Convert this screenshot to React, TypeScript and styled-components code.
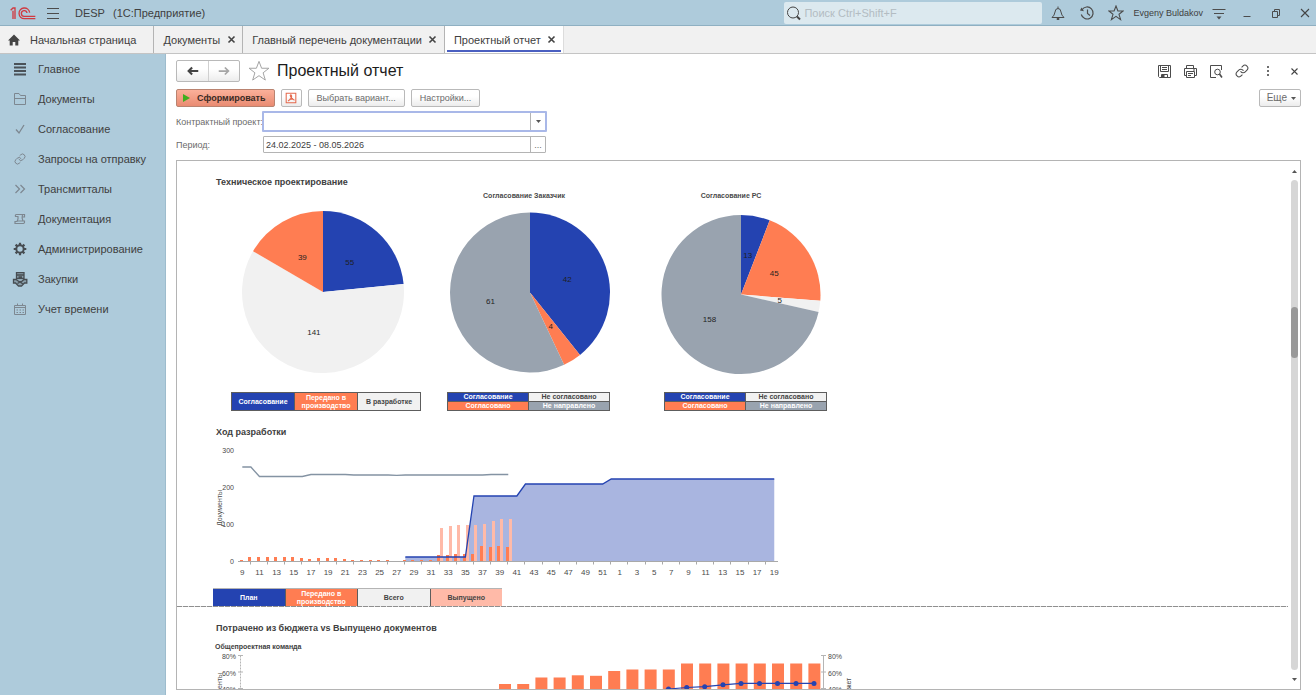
import React from "react";
import styled, { createGlobalStyle, css } from "styled-components";
import { Link as ChainLink } from "lucide-react";

const c = {
  sky: "#aecbdb",
  skyLine: "#8fb0c2",
  text: "#404040",
  muted: "#6b6b6b",
  line: "#b4b4b4",
  blue: "#2443b1",
  orange: "#ff7d52",
  pink: "#ffbaa8",
  light: "#f1f1f1",
  gray: "#99a3af",
  area: "#a9b5e0",
};

const GlobalStyle = createGlobalStyle`
  *, *::before, *::after { box-sizing: border-box; }
  body { margin: 0; background: #fff; color: ${c.text}; font-family: "Liberation Sans", Arial, sans-serif; font-size: 11px; }
  button, input, select { font: inherit; color: inherit; margin: 0; }
  ul, nav, h1, h2, h3, figure { margin: 0; padding: 0; }
  ul { list-style: none; }
`;

const Shell = styled.div`
  display: flex;
  flex-direction: column;
  height: 100vh;
  overflow: hidden;
`;

const TitleBar = styled.header`
  display: flex;
  align-items: center;
  flex: none;
  height: 26px;
  padding: 0 3px 0 10px;
  background: ${c.sky};
  border-bottom: 1px solid ${c.skyLine};
`;

const IconButton = styled.button<{ $w?: number }>`
  display: inline-flex;
  align-items: center;
  justify-content: center;
  flex: none;
  width: ${(p) => p.$w ?? 16}px;
  height: 22px;
  padding: 0;
  border: 0;
  background: none;
  color: #4c4c4c;
`;

const AppName = styled.div`
  display: flex;
  gap: 8px;
  margin-left: 5px;
  white-space: nowrap;
`;

const Search = styled.label`
  display: flex;
  align-items: center;
  gap: 2px;
  width: 258px;
  height: 22px;
  margin: 0 8px 0 auto;
  padding-left: 2px;
  background: #dce9ef;
  border-radius: 2px;
  input {
    flex: 1;
    min-width: 0;
    padding: 0;
    border: 0;
    background: none;
    outline: none;
  }
  input::placeholder { color: #b3bcc2; opacity: 1; }
`;

const WindowTools = styled.div`
  display: flex;
  align-items: center;
  gap: 13px;
`;

const WindowButtons = styled(WindowTools)`
  margin-left: 12px;
`;

const UserName = styled.span`
  margin: 0 -5px 0 -4px;
  font-size: 9px;
  white-space: nowrap;
`;

const Tabs = styled.nav`
  display: flex;
  flex: none;
  height: 28px;
  background: ${c.light};
  border-bottom: 1px solid #c4c4c4;
`;

const Tab = styled.div<{ $active?: boolean }>`
  display: flex;
  align-items: center;
  gap: 6px;
  padding: 0 6px 0 9px;
  border-right: 1px solid ${c.line};
  white-space: nowrap;
  a {
    display: flex;
    align-items: center;
    gap: 10px;
    color: inherit;
    text-decoration: none;
  }
  ${(p) =>
    p.$active &&
    css`
      background: linear-gradient(#4a5fc0, #4a5fc0) center 24px / calc(100% - 4px) 2px no-repeat #fff;
      border-right-color: #dcdcdc;
    `}
`;

const HomeTab = styled(Tab)`
  padding: 0 17px 0 8px;
`;

const Body = styled.div`
  display: flex;
  flex: 1;
  min-height: 0;
`;

const Sidebar = styled.nav`
  flex: none;
  width: 166px;
  background: ${c.sky};
  border-right: 1px solid #9dbccd;
`;

const SideLink = styled.a`
  display: grid;
  grid-template-columns: 16px 1fr;
  align-items: center;
  justify-items: start;
  gap: 10px;
  height: 30px;
  padding-left: 12px;
  color: ${c.text};
  text-decoration: none;
  white-space: nowrap;
`;

const Main = styled.main`
  display: flex;
  flex: 1;
  flex-direction: column;
  min-width: 0;
  padding: 6px 8px 5px 10px;
`;

const Row = styled.div`
  display: flex;
  align-items: center;
`;

const PageHead = styled(Row)`
  height: 22px;
  h1 {
    margin: 0 auto 0 7px;
    color: #1c1c1c;
    font-size: 16px;
    font-weight: 400;
    line-height: 22px;
    white-space: nowrap;
  }
`;

const HeadTools = styled(Row)`
  gap: 10px;
  padding-right: 6px;
`;

const raised = css`
  border: 1px solid #b9b9b9;
  border-radius: 2px;
  background: linear-gradient(#fff 40%, #ececec);
`;

const History = styled.div`
  display: flex;
  ${raised}
  margin-right: 8px;
  button {
    width: 31px;
    height: 20px;
  }
  button + button {
    border-left: 1px solid #d0d0d0;
  }
`;

const Toolbar = styled(Row)`
  gap: 6px;
  margin-top: 7px;
  padding-right: 7px;
`;

const Button = styled.button<{ $primary?: boolean; $push?: boolean }>`
  display: inline-flex;
  align-items: center;
  justify-content: center;
  gap: 6px;
  height: 18px;
  padding: 0 8px;
  ${raised}
  color: ${c.muted};
  font-size: 9px;
  line-height: 16px;
  white-space: nowrap;
  ${(p) =>
    p.$push &&
    css`
      gap: 4px;
      margin-left: auto;
      padding: 0 4px 0 7px;
      font-size: 10px;
    `}
  ${(p) =>
    p.$primary &&
    css`
      gap: 7px;
      padding: 0 8px 0 6px;
      border-color: #b98370;
      background: linear-gradient(#fbb09a, #e98b72);
      color: #3a2a24;
      font-weight: 700;
    `}
`;

const PdfButton = styled(Button)`
  width: 21px;
  padding: 0;
`;

const Fields = styled.div`
  display: grid;
  grid-template-columns: 87px 284px;
  align-items: center;
  row-gap: 4px;
  margin: 4px 0 7px;
  font-size: 9px;
  label { color: ${c.muted}; white-space: nowrap; }
`;

const Field = styled.div<{ $focused?: boolean }>`
  display: flex;
  align-items: center;
  height: ${(p) => (p.$focused ? 21 : 17)}px;
  margin: ${(p) => (p.$focused ? "0 0 0 -1px" : "0 1px 0 0")};
  border: ${(p) => (p.$focused ? `2px solid #a9b8e8` : `1px solid ${c.line}`)};
  border-radius: 1px;
  input, select {
    flex: 1;
    align-self: stretch;
    min-width: 0;
    padding: 0 2px;
    border: 0;
    outline: none;
    background: #fff;
    appearance: none;
  }
`;

const FieldEnd = styled.button`
  display: flex;
  align-items: center;
  justify-content: center;
  align-self: stretch;
  width: 15px;
  padding: 0;
  border: 0;
  border-left: 1px solid ${c.line};
  background: none;
  color: ${c.muted};
  line-height: 10px;
`;

const Panel = styled.section`
  display: flex;
  flex: 1;
  min-height: 0;
  margin-right: 7px;
  border: 1px solid ${c.line};
`;

const Sheet = styled.div`
  flex: 1;
  min-width: 0;
  overflow: hidden;
`;

const PageBlock = styled.section<{ $broken?: boolean }>`
  padding: 15px 0 0 36px;
  ${(p) =>
    p.$broken &&
    css`
      padding-bottom: 1px;
      background: repeating-linear-gradient(90deg, #8f8f8f 0 5px, #e4e4e4 5px 6px) bottom / 100% 1px no-repeat;
    `}
  svg { display: block; overflow: visible; }
`;

const BlockTitle = styled.h2<{ $next?: boolean }>`
  margin-top: ${(p) => (p.$next ? 15 : 0)}px;
  padding-left: 3px;
  font-size: 9px;
  line-height: 12px;
`;

const SubTitle = styled.h3`
  margin-top: 8px;
  padding-left: 2px;
  font-size: 7px;
  line-height: 10px;
`;

const Pies = styled.div`
  display: grid;
  grid-template-columns: 190px 163px 163px;
  padding-left: 18px;
  column-gap: 26px;
  figure:last-child { margin-left: 28px; margin-right: -28px; }
`;

const Legend = styled.ul<{ $cols: number; $w?: number }>`
  display: grid;
  grid-template-columns: repeat(${(p) => p.$cols}, 1fr);
  gap: 1px;
  width: ${(p) => (p.$w ? `${p.$w}px` : "100%")};
  height: 19px;
  padding: 1px;
  background: #5d5d5d;
`;

const PlainLegend = styled(Legend)`
  height: 18px;
  padding: 1px 0 0;
  background: linear-gradient(#b4b4b4 1px, #5d5d5d 1px);
`;

const LegendItem = styled.li<{ $bg: string; $dark?: boolean }>`
  display: flex;
  align-items: center;
  justify-content: center;
  background: ${(p) => p.$bg};
  color: ${(p) => (p.$dark ? "#444" : "#fff")};
  font-size: 7px;
  font-weight: 700;
  line-height: 8px;
  text-align: center;
`;

const ChartText = styled.text`
  fill: #4a4a4a;
  font-size: 7px;
`;

const WeekText = styled(ChartText)`
  font-size: 8px;
`;

const SliceText = styled(WeekText)`
  fill: #1f1f1f;
`;

const Scrollbar = styled.div`
  display: flex;
  flex: none;
  flex-direction: column;
  align-items: center;
  gap: 5px;
  width: 12px;
  padding: 6px 0;
`;

const Track = styled.div`
  display: flex;
  flex: 1;
  flex-direction: column;
  width: 7px;
  border-radius: 4px;
  background: #d6d6d6;
`;

const TrackSpace = styled.span<{ $share: number }>`
  flex: ${(p) => p.$share};
`;

const Thumb = styled.span`
  flex: 51;
  border-radius: 4px;
  background: #999;
`;

const ScrollArrow = styled.button`
  display: flex;
  padding: 0;
  border: 0;
  background: none;
  height: 8px;
  align-items: center;
`;

/* ---------- icons ---------- */

type IconProps = { size?: number; w?: number; color?: string; children: React.ReactNode };
const Icon = ({ size = 16, w = 1, color = "currentColor", children }: IconProps) => (
  <svg width={size} height={size} viewBox="0 0 16 16" fill="none" stroke={color} strokeWidth={w} aria-hidden="true">
    {children}
  </svg>
);

const Logo = () => (
  <svg width="26" height="14" viewBox="0 0 78 42" fill="none" stroke="#d03a41" strokeWidth="4" aria-label="1C">
    <path d="M2 13 9 6H15V39M9 14V39" />
    <path d="M59 20A16 16 0 1 0 43 38H76" />
    <path d="M51 21A8.500 8.500 0 1 0 43 31H76" />
  </svg>
);

const Caret = ({ up = false }) => (
  <svg width="5" height="3" viewBox="0 0 5 3" aria-hidden="true">
    <path d={up ? "M0 3 2.500 0 5 3Z" : "M0 0H5L2.500 3Z"} fill="#555" />
  </svg>
);

const Cross = ({ size = 9, w = 2 }) => (
  <svg width={size} height={size} viewBox="0 0 9 9" stroke="#444" strokeWidth={w} aria-hidden="true">
    <path d="M1.500 1.500 7.500 7.500M7.500 1.500 1.500 7.500" />
  </svg>
);

const starPath = "M8 1 9.900 6H15.200L11 9.300 12.600 14.600 8 11.400 3.400 14.600 5 9.300.8 6H6.100Z";
const dim = "#7d8790";

const sections: [string, React.ReactNode][] = [
  ["Главное", <Icon w={2} color="#4b5258"><path d="M2 3H14M2 6.500H14M2 10H14M2 13.500H14" /></Icon>],
  ["Документы", <Icon color={dim}><path d="M2.500 13.500V2.500H7L8.500 4.500H13.500V13.500ZM2.500 7.500H13.500" /></Icon>],
  ["Согласование", <Icon color={dim} w={1.300}><path d="M4 8.500 7 12 12 4" /></Icon>],
  ["Запросы на отправку", <Icon color={dim}><ChainLink x="2" y="2" size={12} strokeWidth={2} color={dim} /></Icon>],
  ["Трансмитталы", <Icon color={dim} w={1.200}><path d="M3.500 4 7.500 8 3.500 12M8.500 4 12.500 8 8.500 12" /></Icon>],
  ["Документация", <Icon color={dim} w={1.200}><path d="M4.500 3.500H12.500V6H10.500M4.500 3.500Q3 3.500 3.500 5.500H6Q6.500 8 5 10.500H3V12.500H11.500Q13 12 12.500 10H5M10.500 3.500Q9.500 7 11 10" /></Icon>],
  ["Администрирование", <Icon color="#474d52" w={2}><circle cx="8" cy="8" r="3.700" /><path strokeWidth="2.200" d="M8 4.300V1.700M8 11.700V14.300M4.300 8H1.700M11.700 8H14.300M5.400 5.400 3.600 3.600M10.600 10.600 12.400 12.400M5.400 10.600 3.600 12.400M10.600 5.400 12.400 3.600" /></Icon>],
  ["Закупки", <Icon color="#474d52" w={1.300}><path fill="#474d52" fillOpacity=".35" d="M4.500 1.700H12V7.500H4.500ZM4.500 4H12M6.500 6H10" /><path fill="#474d52" fillOpacity=".35" d="M1.500 8.500H4L7 10.500H9.500L12 8.500H14.800V12H12.500L9.500 15H6.500L3.500 12H1.500ZM5.500 12.500 8 11 11 13" /></Icon>],
  ["Учет времени", <Icon color={dim}><path d="M2.500 4.500H13.500V13.500H2.500ZM2.500 6.500H13.500M5.500 2.500V5M10.500 2.500V5" /><path strokeDasharray="1.500 1.500" d="M4.500 9H12M4.500 11.500H12" /></Icon>],
];

/* ---------- charts ---------- */

type Slice = [number, string];
const Pie = ({ w, cx, cy, r, slices, caption, captionX = 0 }: {
  w: number; cx: number; cy: number; r: number; slices: Slice[]; caption?: string; captionX?: number;
}) => {
  const total = slices.reduce((s, [v]) => s + v, 0);
  const point = (turn: number, radius: number) => {
    const a = turn * Math.PI * 2;
    return [cx + Math.sin(a) * radius, cy - Math.cos(a) * radius];
  };
  let turn = 0;
  const parts = slices.map(([value, color]) => {
    const start = turn;
    turn += value / total;
    const [x1, y1] = point(start, r);
    const [x2, y2] = point(turn, r);
    const [lx, ly] = point((start + turn) / 2, r / 2);
    const large = value / total > 0.5 ? 1 : 0;
    return { value, color, lx, ly, d: `M${cx} ${cy}L${x1} ${y1}A${r} ${r} 0 ${large} 1 ${x2} ${y2}Z` };
  });
  return (
    <svg width={w} height={204} viewBox={`0 0 ${w} 204`} role="img">
      {caption && <ChartText x={captionX} y={10} textAnchor="middle" fontWeight="700">{caption}</ChartText>}
      {parts.map((p) => <path key={p.value} d={p.d} fill={p.color} />)}
      {parts.map((p) => (
        <SliceText key={p.value} x={p.lx - 0.5} y={p.ly + 3} textAnchor="middle">{p.value}</SliceText>
      ))}
    </svg>
  );
};

const STEP = 8.58;
const px = (i: number) => 29.3 + i * STEP;
const ZERO = 123;
const total = [29, 29, 38.5, 38.5, 38.5, 38.5, 38.5, 38.5, 36.5, 36.5, 36.5, 36.5, 36.5, 37, 37, 37, 37, 37, 37.4, 37, 37, 37, 37, 37, 37, 37, 37, 37, 37, 36.5, 36.5, 36.5];
const made = [1, 3.7, 3.7, 3.7, 3.7, 3.7, 3.7, 3.3, 2.3, 2.7, 2.7, 2.7, 1.6, 1.2, 1.2, 1.2, 1.2, 1.2, 0, 1.2, 1.2, 1, 1, 6.5, 6.5, 6.8, 7.2, 7.2, 14.6, 14.4, 14.6, 14.4];
const released = [33.5, 35.5, 35.8, 36.5, 36.5, 37, 40.5, 41.6, 41.6];
const plan: [number, number][] = [[19, 119], [26, 119], [27, 58], [32, 58], [33, 46], [42, 46], [43, 41], [62, 41]];
const planLine = plan.map(([i, y]) => `${px(i)},${y}`).join(" ");

const ProgressChart = () => (
  <svg width="570" height="150" viewBox="0 0 570 150" role="img">
    {[300, 200, 100, 0].map((v) => (
      <ChartText key={v} x={21} y={126 - v * 0.37} textAnchor="end">{v}</ChartText>
    ))}
    <ChartText transform="translate(9 88) rotate(-90)">Документы</ChartText>
    <polygon points={`${px(19)},${ZERO} ${planLine} ${px(62)},${ZERO}`} fill={c.area} />
    <g shapeRendering="crispEdges">
      {released.map((h, i) => <rect key={i} x={Math.round(px(i + 23) + 0.5)} y={ZERO - h} width="3" height={h} fill={c.pink} />)}
      {made.map((h, i) => <rect key={i} x={Math.round(px(i) - 2.500)} y={ZERO - h} width="3" height={h} fill={c.orange} />)}
    </g>
    <polyline points={total.map((y, i) => `${px(i)},${y}`).join(" ")} fill="none" stroke="#8493a3" strokeWidth="1.300" />
    <polyline points={planLine} fill="none" stroke={c.blue} strokeWidth="1.300" />
    <path d="M25 123.500H565" stroke="#a9a9a9" />
    {Array.from({ length: 31 }, (_, k) => (
      <path key={k} d={`M${Math.round(px(k * 2 + 1)) - 0.5} 124v2.500`} stroke="#a9a9a9" />
    ))}
    {Array.from({ length: 32 }, (_, k) => {
      const week = k * 2 + 9;
      return <WeekText key={k} x={px(k * 2)} y={137} textAnchor="middle">{week > 52 ? week - 52 : week}</WeekText>;
    })}
  </svg>
);

const spent = [5, 5, 11.5, 11.5, 13.7, 13.2, 18, 19.5, 19.5, 19.5, 25.5, 25.5, 25.5, 25.5, 25.5, 25.5, 25.5, 25.5];
const done: [number, number][] = [[437, 39.5], [455.5, 37], [473.7, 35.5], [491.7, 34.7], [510, 32.8], [528, 31.4], [546.5, 31.4], [564.5, 31.4], [583, 31.4], [601, 31.4]];

const BudgetChart = () => (
  <svg width="650" height="120" viewBox="0 0 650 120" role="img">
    {[80, 60, 40].map((v, k) => (
      <React.Fragment key={v}>
        <ChartText x={23} y={7 + k * 16.5} textAnchor="end">{v}%</ChartText>
        <ChartText x={615} y={7 + k * 16.5}>{v}%</ChartText>
        <path d={`M25 ${3.5 + k * 16.5}h5M608 ${3.5 + k * 16.5}h5`} stroke="#b5b5b5" />
      </React.Fragment>
    ))}
    <path d="M27.500 3.500V110" stroke="#b5b5b5" strokeDasharray="2 1" />
    <path d="M610.500 3.500V110" stroke="#b5b5b5" />
    <ChartText transform="translate(9 57) rotate(-90)">Документы</ChartText>
    <ChartText transform="translate(638 51) rotate(-90)">Бюджет</ChartText>
    {spent.map((h, i) => <rect key={i} x={286 + i * 18.2} y={37 - h} width="12" height={h + 70} fill={c.orange} />)}
    <polyline points={done.map((p) => p.join(",")).join(" ")} fill="none" stroke={c.blue} strokeWidth="1.200" />
    {done.slice(1).map(([x, y]) => <circle key={x} cx={x} cy={y} r="2.500" fill={c.blue} />)}
  </svg>
);

const ApprovalLegend = () => (
  <Legend $cols={2}>
    <LegendItem $bg={c.blue}>Согласование</LegendItem>
    <LegendItem $bg={c.light} $dark>Не согласовано</LegendItem>
    <LegendItem $bg={c.orange}>Согласовано</LegendItem>
    <LegendItem $bg={c.gray}>Не направлено</LegendItem>
  </Legend>
);

const tabs = ["Документы", "Главный перечень документации", "Проектный отчет"];

export default function App() {
  return (
    <Shell>
      <GlobalStyle />
      <TitleBar>
        <Logo />
        <IconButton $w={34} aria-label="Меню">
          <Icon><path d="M2 3.500H14M2 8.500H14M2 13.500H14" /></Icon>
        </IconButton>
        <AppName><span>DESP</span><span>(1С:Предприятие)</span></AppName>
        <Search>
          <Icon color="#444"><circle cx="7" cy="7.500" r="5.500" /><path strokeWidth="2" d="M11 11.500 14 14.500" /></Icon>
          <input type="text" placeholder="Поиск Ctrl+Shift+F" aria-label="Поиск" />
        </Search>
        <WindowTools>
          <IconButton aria-label="Уведомления">
            <Icon><path d="M2 12.500Q4.500 10.500 5 7 5.300 3.500 8 3.500 10.700 3.500 11 7 11.500 10.500 14 12.500ZM8 3.500V1.500" /><path fill="currentColor" d="M7 13.500H9V14.500H7Z" /></Icon>
          </IconButton>
          <IconButton aria-label="История">
            <Icon w={1.200}><path d="M3 4.800A6 6 0 1 1 2.300 9.500M8.500 4.500V8.500L11 10.500" /><path fill="currentColor" stroke="none" d="M1 5.500 2.500 2.500 5 6.200Z" /></Icon>
          </IconButton>
          <IconButton aria-label="Избранное"><Icon w={1.100}><path d={starPath} /></Icon></IconButton>
          <UserName>Evgeny Buldakov</UserName>
          <IconButton aria-label="Настройки окна">
            <Icon><path d="M1.500 4.500H14.500M3 8.500H13" /><path fill="currentColor" stroke="none" d="M5.500 11.500H10.500L8 14.500Z" /></Icon>
          </IconButton>
        </WindowTools>
        <WindowButtons>
          <IconButton aria-label="Свернуть"><Icon><path d="M4.500 11.500H11.500" /></Icon></IconButton>
          <IconButton aria-label="Восстановить"><Icon><path d="M4.500 6.500H9.500V12.500H4.500ZM6.500 6.500V4.500H11.500V10.500H9.500" /></Icon></IconButton>
          <IconButton aria-label="Закрыть"><Cross size={12} w={0.800} /></IconButton>
        </WindowButtons>
      </TitleBar>

      <Tabs>
        <HomeTab>
          <a href="#home">
            <svg width="12" height="12" viewBox="0 0 12 12" fill="#444" aria-hidden="true">
              <path d="M6 .5 12 6.500H10.300V11.500H7.300V8H4.700V11.500H1.700V6.500H0Z" />
            </svg>
            Начальная страница
          </a>
        </HomeTab>
        {tabs.map((t, i) => (
          <Tab key={t} $active={i === 2}>
            <a href={`#tab-${i}`}>{t}</a>
            <IconButton $w={10} aria-label={`Закрыть ${t}`}><Cross w={1.600} /></IconButton>
          </Tab>
        ))}
      </Tabs>

      <Body>
        <Sidebar>
          {sections.map(([name, icon]) => (
            <SideLink key={name} href={`#${name}`}>
              {icon}
              <span>{name}</span>
            </SideLink>
          ))}
        </Sidebar>

        <Main>
          <PageHead>
            <History>
              <IconButton aria-label="Назад"><Icon size={14} w={2.400} color="#444"><path d="M3 8H14M7 4 3 8 7 12" /></Icon></IconButton>
              <IconButton aria-label="Вперед"><Icon size={14} w={2} color="#a5a5a5"><path d="M2 8H13M9 4 13 8 9 12" /></Icon></IconButton>
            </History>
            <IconButton $w={22} aria-label="В избранное"><Icon size={22} w={0.700} color="#a0a0a0"><path d={starPath} /></Icon></IconButton>
            <h1>Проектный отчет</h1>
            <HeadTools>
              <IconButton aria-label="Сохранить"><Icon><path d="M2.500 2.500H14.500V14.500H3.500L2.500 13.500ZM4.500 2.500V8.500H12.500V2.500M6 4.500H11M6 6.500H11M5.500 14.500V11.500H11.500V14.500" /><path fill="currentColor" d="M6.500 12H8V14H6.500Z" /></Icon></IconButton>
              <IconButton aria-label="Печать"><Icon><path d="M4.500 5.500V2.500H11.500V5.500M4.500 12.500H2.500V5.500H14.500V12.500H12.500M4.500 8.500H12.500V14.500H4.500ZM6 10.500H11M6 12.500H9M11 7H13" /></Icon></IconButton>
              <IconButton aria-label="Просмотр"><Icon><path d="M8 14.500H2.500V2.500H13.500V7" /><circle cx="9.500" cy="9" r="2.800" /><path strokeWidth="1.600" d="M11.500 11 14 14.500" /></Icon></IconButton>
              <IconButton aria-label="Ссылка"><ChainLink size={14} strokeWidth={1.800} /></IconButton>
              <IconButton aria-label="Ещё действия"><Icon><path fill="currentColor" d="M7.500 3.500H8.500V4.500H7.500ZM7.500 7.500H8.500V8.500H7.500ZM7.500 11.500H8.500V12.500H7.500Z" /></Icon></IconButton>
              <IconButton aria-label="Закрыть отчет"><Cross w={1.100} /></IconButton>
            </HeadTools>
          </PageHead>

          <Toolbar>
            <Button $primary>
              <svg width="7" height="8" viewBox="0 0 7 8" aria-hidden="true"><path d="M0 0 7 4 0 8Z" fill="#3fae1f" /></svg>
              Сформировать
            </Button>
            <PdfButton aria-label="PDF">
              <Icon size={14} color="#e5694d" w={1.200}><path d="M2.500 2.500H13.500V13.500H2.500ZM7 4.500Q9.500 4 8.500 7.500 7.500 10 4.500 11.500M7 4.500Q7.500 8.500 12 10.500M6 9.500 10.500 9" /></Icon>
            </PdfButton>
            <Button>Выбрать вариант...</Button>
            <Button>Настройки...</Button>
            <Button $push>Еще <Caret /></Button>
          </Toolbar>

          <Fields>
            <label htmlFor="project">Контрактный проект:</label>
            <Field $focused>
              <select id="project" defaultValue=""><option value=""></option></select>
              <FieldEnd aria-label="Выбрать"><Caret /></FieldEnd>
            </Field>
            <label htmlFor="period">Период:</label>
            <Field>
              <input id="period" type="text" defaultValue="24.02.2025 - 08.05.2026" />
              <FieldEnd aria-label="Выбрать период">...</FieldEnd>
            </Field>
          </Fields>

          <Panel>
            <Sheet>
              <PageBlock $broken>
                <BlockTitle>Техническое проектирование</BlockTitle>
                <Pies>
                  <figure>
                    <Pie w={190} cx={92} cy={104} r={81} slices={[[55, c.blue], [141, c.light], [39, c.orange]]} />
                    <Legend $cols={3}>
                      <LegendItem $bg={c.blue}>Согласование</LegendItem>
                      <LegendItem $bg={c.orange}>Передано в производство</LegendItem>
                      <LegendItem $bg={c.light} $dark>В разработке</LegendItem>
                    </Legend>
                  </figure>
                  <figure>
                    <Pie w={163} cx={83} cy={104.5} r={80} caption="Согласование Заказчик" captionX={77}
                      slices={[[42, c.blue], [4, c.orange], [61, c.gray]]} />
                    <ApprovalLegend />
                  </figure>
                  <figure>
                    <Pie w={163} cx={77} cy={106.5} r={79.5} caption="Согласование РС" captionX={67}
                      slices={[[13, c.blue], [45, c.orange], [5, c.light], [158, c.gray]]} />
                    <ApprovalLegend />
                  </figure>
                </Pies>
                <BlockTitle $next>Ход разработки</BlockTitle>
                <ProgressChart />
                <PlainLegend $cols={4} $w={289}>
                  <LegendItem $bg={c.blue}>План</LegendItem>
                  <LegendItem $bg={c.orange}>Передано в производство</LegendItem>
                  <LegendItem $bg={c.light} $dark>Всего</LegendItem>
                  <LegendItem $bg={c.pink} $dark>Выпущено</LegendItem>
                </PlainLegend>
              </PageBlock>
              <PageBlock>
                <BlockTitle>Потрачено из бюджета vs Выпущено документов</BlockTitle>
                <SubTitle>Общепроектная команда</SubTitle>
                <BudgetChart />
              </PageBlock>
            </Sheet>
            <Scrollbar>
              <ScrollArrow aria-label="Вверх"><Caret up /></ScrollArrow>
              <Track>
                <TrackSpace $share={127} />
                <Thumb />
                <TrackSpace $share={312} />
              </Track>
              <ScrollArrow aria-label="Вниз"><Caret /></ScrollArrow>
            </Scrollbar>
          </Panel>
        </Main>
      </Body>
    </Shell>
  );
}
